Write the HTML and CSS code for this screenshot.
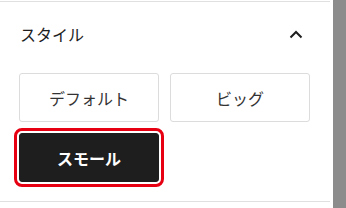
FILE: index.html
```html
<!DOCTYPE html>
<html lang="ja">
<head>
  <meta charset="UTF-8">
  <title>スタイル</title>
  <link rel="stylesheet" href="styles.css">
</head>
<body>
  <div class="layout">
    <section class="panel">
      <div class="panel-header">
        <h2 class="panel-title">スタイル</h2>
        <button class="toggle" aria-label="閉じる">
          <svg width="14" height="9" viewBox="0 0 14 9">
            <polyline points="1.5,7.5 7,2 12.5,7.5" fill="none" stroke="#1e1e1e" stroke-width="2"/>
          </svg>
        </button>
      </div>
      <div class="estilos">
        <button class="estilo">デフォルト</button>
        <button class="estilo">ビッグ</button>
        <button class="estilo activo">スモール</button>
      </div>
    </section>
    <div class="scroll"></div>
  </div>
</body>
</html>
```

FILE: styles.css
```css
body {
  margin: 0;
  background: #ffffff;
  font-family: "Noto Sans CJK JP", "Noto Sans", sans-serif;
  color: #1e1e1e;
}

.layout {
  display: flex;
  height: 208px;
}

.panel {
  width: 330px;
  margin-top: 1px;
  align-self: flex-start;
  border-top: 1px solid #e0e0e0;
  border-bottom: 1px solid #e0e0e0;
}

.scroll {
  width: 13px;
  margin-left: 3px;
  background: #8c8c8c;
}

.panel-header {
  display: flex;
  justify-content: space-between;
  align-items: center;
  height: 64px;
  padding: 0 27px 0 20px;
}

.panel-title {
  margin: 0;
  font-size: 16px;
  font-weight: 400;
}

.toggle {
  background: none;
  border: none;
  padding: 0;
  display: flex;
  cursor: pointer;
}

.estilos {
  display: grid;
  grid-template-columns: 140px 140px;
  grid-auto-rows: 49px;
  gap: 11px;
  padding: 7px 20px 19px 19px;
}

.estilo {
  font-family: inherit;
  font-size: 16px;
  color: #333333;
  background: #ffffff;
  border: 1px solid #dcdcdc;
  border-radius: 3px;
  cursor: pointer;
}

.activo {
  background: #1e1e1e;
  border-color: #1e1e1e;
  color: #ffffff;
  font-weight: 700;
  outline: 3px solid #e60012;
  outline-offset: 2px;
}
```
